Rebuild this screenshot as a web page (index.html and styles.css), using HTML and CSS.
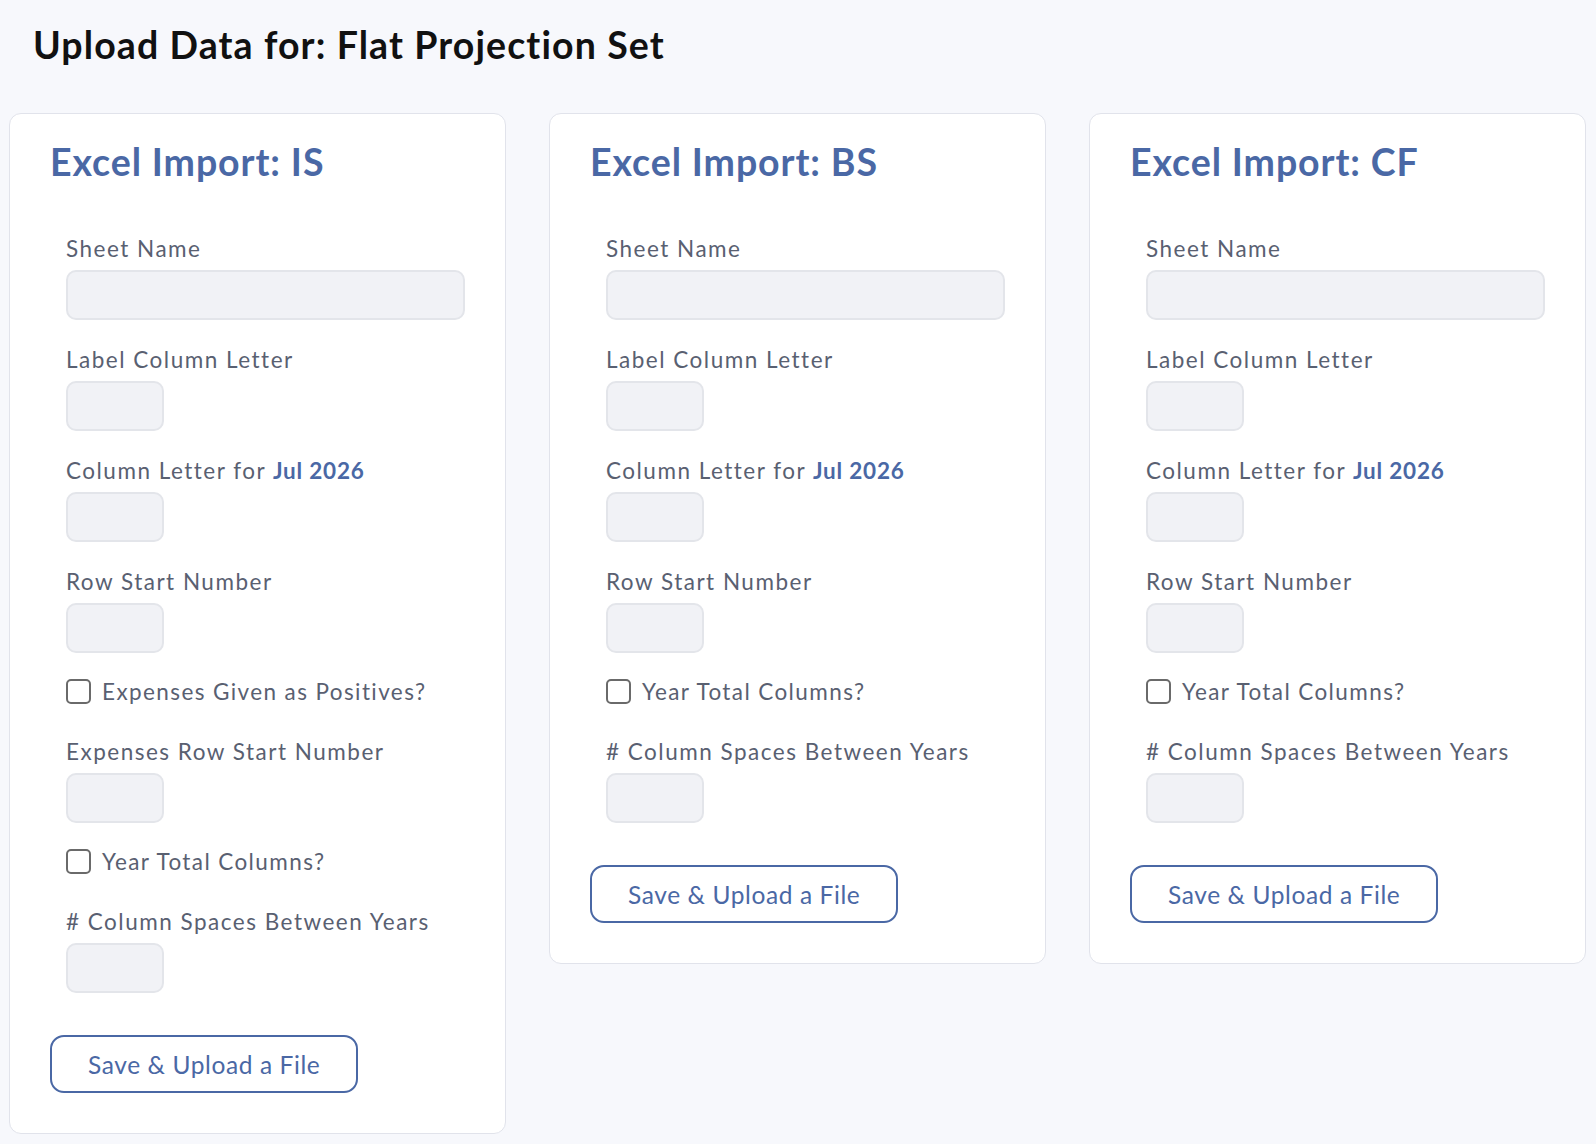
FILE: index.html
```html
<!DOCTYPE html>
<html lang="en">
<head>
<meta charset="UTF-8">
<meta name="viewport" content="width=device-width, initial-scale=1.0">
<title>Upload Data</title>
<link rel="stylesheet" href="styles.css">
</head>
<body>
<h1 class="page-title">Upload Data for: Flat Projection Set</h1>

<div class="import-grid">
    <section class="import-card">
        <h2 class="card-title">Excel Import: IS</h2>
        <div class="field-list">
            <div class="field">
                <label>Sheet Name</label>
                <input class="input-wide" type="text">
            </div>
            <div class="field">
                <label>Label Column Letter</label>
                <input class="input-short" type="text">
            </div>
            <div class="field">
                <label>Column Letter for <b class="period">Jul 2026</b></label>
                <input class="input-short" type="text">
            </div>
            <div class="field">
                <label>Row Start Number</label>
                <input class="input-short" type="text">
            </div>
            <label class="check-row"><input type="checkbox"> Expenses Given as Positives?</label>
            <div class="field">
                <label>Expenses Row Start Number</label>
                <input class="input-short" type="text">
            </div>
            <label class="check-row"><input type="checkbox"> Year Total Columns?</label>
            <div class="field">
                <label># Column Spaces Between Years</label>
                <input class="input-short" type="text">
            </div>
        </div>
        <button class="btn-upload">Save &amp; Upload a File</button>
    </section>

    <section class="import-card">
        <h2 class="card-title">Excel Import: BS</h2>
        <div class="field-list">
            <div class="field">
                <label>Sheet Name</label>
                <input class="input-wide" type="text">
            </div>
            <div class="field">
                <label>Label Column Letter</label>
                <input class="input-short" type="text">
            </div>
            <div class="field">
                <label>Column Letter for <b class="period">Jul 2026</b></label>
                <input class="input-short" type="text">
            </div>
            <div class="field">
                <label>Row Start Number</label>
                <input class="input-short" type="text">
            </div>
            <label class="check-row"><input type="checkbox"> Year Total Columns?</label>
            <div class="field">
                <label># Column Spaces Between Years</label>
                <input class="input-short" type="text">
            </div>
        </div>
        <button class="btn-upload">Save &amp; Upload a File</button>
    </section>

    <section class="import-card">
        <h2 class="card-title">Excel Import: CF</h2>
        <div class="field-list">
            <div class="field">
                <label>Sheet Name</label>
                <input class="input-wide" type="text">
            </div>
            <div class="field">
                <label>Label Column Letter</label>
                <input class="input-short" type="text">
            </div>
            <div class="field">
                <label>Column Letter for <b class="period">Jul 2026</b></label>
                <input class="input-short" type="text">
            </div>
            <div class="field">
                <label>Row Start Number</label>
                <input class="input-short" type="text">
            </div>
            <label class="check-row"><input type="checkbox"> Year Total Columns?</label>
            <div class="field">
                <label># Column Spaces Between Years</label>
                <input class="input-short" type="text">
            </div>
        </div>
        <button class="btn-upload">Save &amp; Upload a File</button>
    </section>
</div>
</body>
</html>
```

FILE: styles.css
```css
body {
    font-family: Lato, "Open Sans", sans-serif;
    background-color: #f7f8fc;
    color: #596071;
    margin: 0;
    padding: 0 10px 0 9px;
}
.page-title {
    font-size: 37.5px;
    font-weight: 700;
    line-height: 45px;
    letter-spacing: 1.1px;
    color: #111;
    margin: 22px 0 46px 24px;
}
.import-grid {
    display: grid;
    grid-template-columns: repeat(3, 1fr);
    gap: 43px;
    align-items: start;
}
.import-card {
    background-color: #fff;
    border: 1px solid #e1e3eb;
    border-radius: 12px;
    padding: 25px 40px 40px;
}
.card-title {
    font-size: 37.5px;
    font-weight: 700;
    line-height: 45px;
    letter-spacing: 0.9px;
    color: #4a68a5;
    margin: 0 0 51px;
}
.field-list {
    padding-left: 16px;
}
.field {
    margin-bottom: 26px;
}
.field label {
    display: block;
    font-size: 22.5px;
    line-height: 27px;
    letter-spacing: 1.5px;
    margin-bottom: 8px;
}
.period {
    color: #4a68a5;
    letter-spacing: 0.8px;
}
input[type="text"] {
    display: block;
    box-sizing: border-box;
    height: 50px;
    background-color: #f1f2f6;
    border: 2px solid #e3e5ea;
    border-radius: 10px;
}
.input-wide { width: 100%; }
.input-short { width: 98px; }
.check-row {
    display: flex;
    align-items: center;
    gap: 11px;
    height: 25px;
    font-size: 22.5px;
    letter-spacing: 1.4px;
    margin-bottom: 34px;
}
.check-row input {
    appearance: none;
    flex-shrink: 0;
    width: 25px;
    height: 25px;
    margin: 0;
    border: 2px solid #6a6a6a;
    border-radius: 5px;
    background: #fff;
}
.btn-upload {
    margin-top: 16px;
    height: 58px;
    padding: 0 36px;
    background: #fff;
    border: 2px solid #4a68a5;
    border-radius: 14px;
    color: #4a68a5;
    font-family: inherit;
    font-size: 24.5px;
    letter-spacing: 0.6px;
    cursor: pointer;
}
```
